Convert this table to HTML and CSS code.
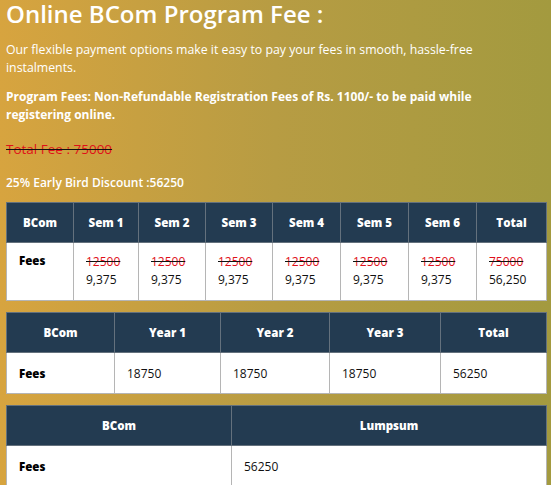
FILE: index.html
```html
<!DOCTYPE html>
<html>
<head>
<meta charset="utf-8">
<link rel="stylesheet" href="styles.css">
</head>
<body>
<div class="page">
  <h1 class="title">Online BCom Program Fee :</h1>
  <p class="intro">Our flexible payment options make it easy to pay your fees in smooth, hassle-free instalments.</p>
  <p class="note">Program Fees: Non-Refundable Registration Fees of Rs. 1100/- to be paid while registering online.</p>
  <p class="total"><span class="strike">Total Fee : 75000</span></p>
  <p class="discount">25% Early Bird Discount :56250</p>

  <table class="fee t1">
    <thead>
      <tr>
        <th class="c-a">BCom</th><th class="c-b">Sem 1</th><th class="c-c">Sem 2</th><th class="c-d">Sem 3</th><th class="c-e">Sem 4</th><th class="c-f">Sem 5</th><th class="c-g">Sem 6</th><th>Total</th>
      </tr>
    </thead>
    <tbody>
      <tr>
        <td class="lbl">Fees</td>
        <td><span class="old">12500</span><span class="new">9,375</span></td>
        <td><span class="old">12500</span><span class="new">9,375</span></td>
        <td><span class="old">12500</span><span class="new">9,375</span></td>
        <td><span class="old">12500</span><span class="new">9,375</span></td>
        <td><span class="old">12500</span><span class="new">9,375</span></td>
        <td><span class="old">12500</span><span class="new">9,375</span></td>
        <td><span class="old">75000</span><span class="new">56,250</span></td>
      </tr>
    </tbody>
  </table>

  <table class="fee t2">
    <thead>
      <tr>
        <th class="y-a">BCom</th><th class="y-b">Year 1</th><th class="y-c">Year 2</th><th class="y-d">Year 3</th><th>Total</th>
      </tr>
    </thead>
    <tbody>
      <tr>
        <td class="lbl">Fees</td><td>18750</td><td>18750</td><td>18750</td><td>56250</td>
      </tr>
    </tbody>
  </table>

  <table class="fee t3">
    <thead>
      <tr>
        <th class="l-a">BCom</th><th>Lumpsum</th>
      </tr>
    </thead>
    <tbody>
      <tr>
        <td class="lbl">Fees</td><td>56250</td>
      </tr>
    </tbody>
  </table>
</div>
</body>
</html>
```

FILE: styles.css
```css
html, body {
  margin: 0;
  padding: 0;
}
body {
  width: 551px;
  height: 485px;
  overflow: hidden;
  background: linear-gradient(90deg, #d7a43f 0%, #b79c43 50%, #a39a3f 100%);
  font-family: "Open Sans", "DejaVu Sans", sans-serif;
  color: #fff;
}
.page {
  padding: 0 4px 0 6px;
}
.title {
  margin: 0;
  padding-top: 0;
  font-size: 24px;
  line-height: 28px;
  font-weight: 600;
}
.intro {
  margin: 13px 0 0;
  max-width: 470px;
  font-size: 12.3px;
  line-height: 18px;
}
.note {
  margin: 11px 0 0;
  max-width: 470px;
  font-size: 12px;
  line-height: 18px;
  font-weight: 700;
}
.total {
  margin: 15px 0 0;
  font-size: 13.5px;
  line-height: 20px;
}
.strike {
  color: #e0101a;
  text-decoration: line-through;
  text-decoration-color: #111;
}
.discount {
  margin: 14px 0 0;
  font-size: 12px;
  line-height: 20px;
  font-weight: 600;
}
.fee {
  width: 541px;
  border-collapse: collapse;
  border: 1px solid #8a8a8a;
  table-layout: fixed;
}
.t1 { margin-top: 9px; }
.t2 { margin-top: 11px; }
.t3 { margin-top: 11px; }
.fee th {
  background: #233b51;
  color: #fff;
  font-size: 11.5px;
  font-weight: 800;
  height: 39px;
  padding: 0;
  text-align: center;
  border: 1px solid #64717d;
}
.fee td {
  background: #fff;
  color: #111;
  font-size: 12px;
  border: 1px solid #b5b5b5;
  padding: 0 12px;
  text-align: left;
  height: 40px;
}
.fee td.lbl {
  font-weight: 800;
  font-size: 11.5px;
  color: #000;
}
.t1 td {
  vertical-align: top;
  padding-top: 10px;
  height: 47px;
  padding-bottom: 0;
}
.old {
  display: block;
  color: #e0101a;
  text-decoration: line-through;
  text-decoration-color: #111;
  line-height: 17px;
}
.new {
  display: block;
  line-height: 19px;
}
.c-a { width: 66px; }
.c-b { width: 64px; }
.c-c { width: 66px; }
.c-d { width: 66px; }
.c-e { width: 67px; }
.c-f { width: 67px; }
.c-g { width: 67px; }
.y-a { width: 107px; }
.y-b { width: 105px; }
.y-c { width: 108px; }
.y-d { width: 110px; }
.l-a { width: 224px; }
```
